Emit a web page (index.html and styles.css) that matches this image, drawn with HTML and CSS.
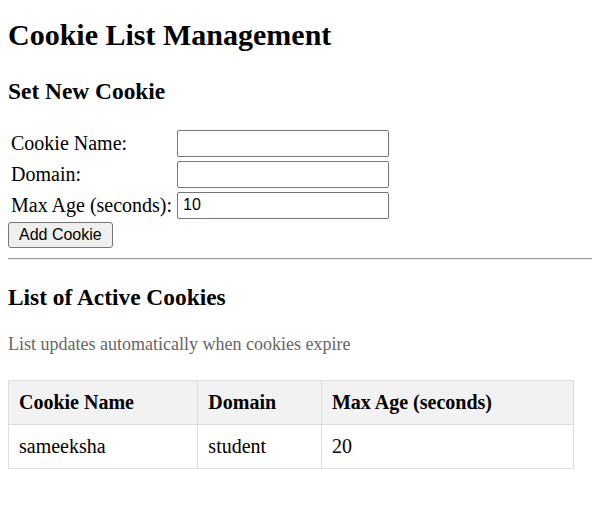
FILE: index.html
```html
<!DOCTYPE html>
<html>
<head>
<meta charset="utf-8">
<title>Cookie List Management</title>
<link rel="stylesheet" href="styles.css">
</head>
<body>
<h1 class="title">Cookie List Management</h1>
<h3 class="section section-form">Set New Cookie</h3>
<form class="cookie-form">
  <table class="form-table">
    <tr>
      <td class="label">Cookie Name:</td>
      <td class="input-cell"><input class="field" type="text"></td>
    </tr>
    <tr>
      <td class="label">Domain:</td>
      <td class="input-cell"><input class="field" type="text"></td>
    </tr>
    <tr>
      <td class="label">Max Age (seconds):</td>
      <td class="input-cell"><input class="field" type="text" value="10"></td>
    </tr>
  </table>
  <button class="btn" type="button">Add Cookie</button>
</form>
<div class="divider"></div>
<h3 class="section section-list">List of Active Cookies</h3>
<p class="note">List updates automatically when cookies expire</p>
<table class="cookies">
  <thead>
    <tr><th>Cookie Name</th><th>Domain</th><th>Max Age (seconds)</th></tr>
  </thead>
  <tbody>
    <tr><td>sameeksha</td><td>student</td><td>20</td></tr>
  </tbody>
</table>
</body>
</html>
```
FILE: styles.css
```css
html {
  overflow-x: hidden;
}
body {
  margin: 8px;
  font-family: "Liberation Serif", "Times New Roman", serif;
  font-size: 20px;
  color: #000;
  background: #fff;
}
.title {
  font-size: 30px;
  margin: 10px 0 20px;
}
.section {
  font-size: 23.4px;
}
.section-form {
  margin: 26.4px 0 21.4px;
}
.section-list {
  margin: 24.4px 0 22.4px;
}
.cookie-form {
  margin: 0;
}
.form-table {
  border-spacing: 2px;
  font-size: 20px;
}
.form-table td {
  padding: 1px;
}
.form-table .input-cell {
  padding-left: 2px;
}
.field {
  box-sizing: border-box;
  width: 212px;
  height: 27px;
  border: 1px solid #767676;
  border-radius: 2px;
  padding: 0 5px;
  font-family: "Liberation Sans", Arial, sans-serif;
  font-size: 16px;
  display: block;
}
.btn {
  box-sizing: border-box;
  height: 26px;
  padding: 0 10px;
  font-family: "Liberation Sans", Arial, sans-serif;
  font-size: 16px;
  background: #efefef;
  border: 1px solid #767676;
  border-radius: 3px;
  color: #000;
  display: block;
}
.divider {
  height: 0;
  border-top: 1px solid #9a9a9a;
  border-bottom: 1px solid #eeeeee;
  margin: 10px -20px 0 0;
}
.note {
  color: #666;
  font-size: 18px;
  margin: 18px 0;
}
.cookies {
  border-collapse: collapse;
  width: 566px;
  margin-top: 25px;
}
.cookies th,
.cookies td {
  border: 1px solid #ddd;
  padding: 10px;
  text-align: left;
}
.cookies th {
  background: #f2f2f2;
}
```
